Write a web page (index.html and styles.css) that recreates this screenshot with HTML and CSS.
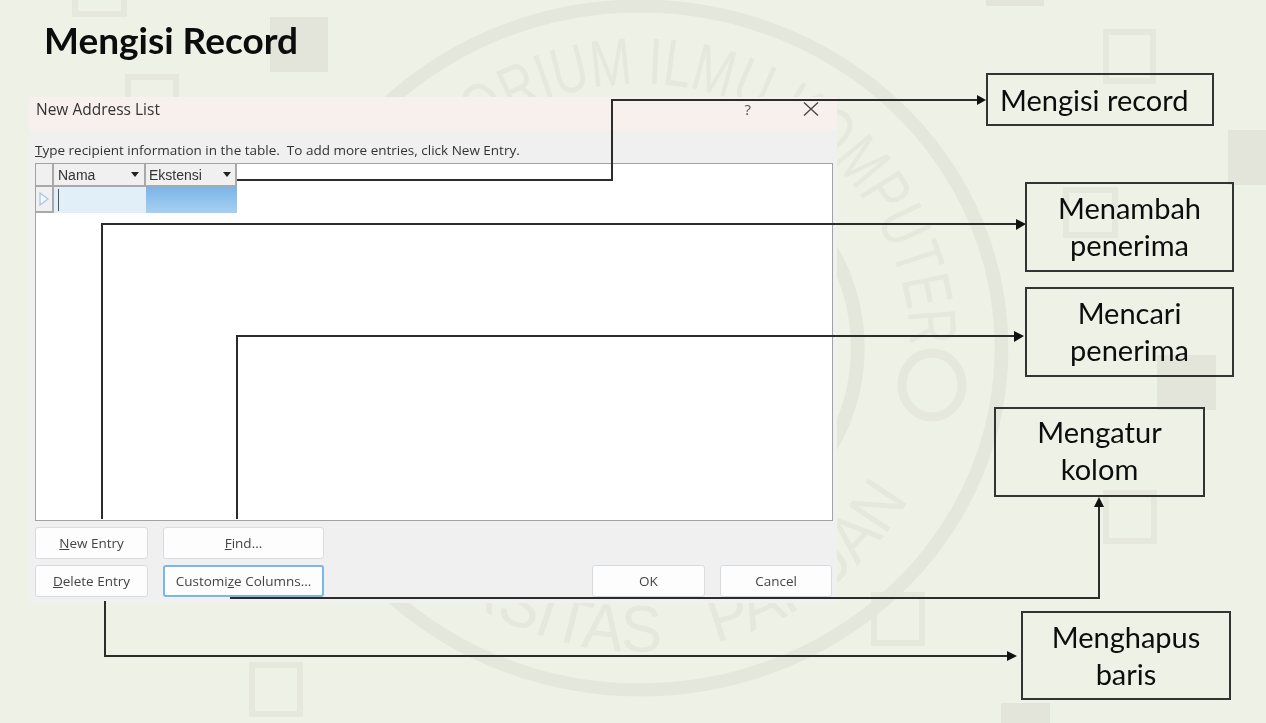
FILE: index.html
```html
<!DOCTYPE html>
<html lang="id">
<head>
<meta charset="utf-8">
<title>Mengisi Record</title>
<link rel="stylesheet" href="styles.css">
</head>
<body>
<main class="slide">
  <svg class="backdrop" viewBox="0 0 1266 723" width="1266" height="723" aria-hidden="true">
    <g class="fill-square">
      <rect x="270" y="17" width="58" height="55"/>
      <rect x="1228" y="130" width="38" height="55"/>
      <rect x="1157" y="355" width="59" height="55"/>
      <rect x="986" y="-5" width="58" height="11"/>
      <rect x="1001" y="703" width="49" height="30"/>
    </g>
    <g class="hollow-square">
      <rect x="75" y="-30" width="49" height="44"/>
      <rect x="128" y="77" width="48" height="50"/>
      <rect x="1106" y="32" width="47" height="49"/>
      <rect x="1066" y="190" width="49" height="45"/>
      <rect x="1106" y="493" width="48" height="48"/>
      <rect x="874" y="595" width="48" height="48"/>
      <rect x="252" y="665" width="48" height="49"/>
    </g>
    <g transform="translate(640 348) scale(1.057 1)">
      <circle class="ring-outer" r="342"/>
      <circle class="ring-inner" r="206"/>
    </g>
    <g transform="translate(640 348) scale(1.02 1)">
      <defs>
        <path id="arc-top" d="M -242.8 -105.5 A 265 265 0 0 1 264.9 -4.6"/>
        <path id="arc-bottom" d="M -287.4 99 A 304 304 0 0 0 263 152"/>
      </defs>
      <text class="seal-text" textLength="720" lengthAdjust="spacingAndGlyphs"><textPath href="#arc-top">KONSORIUM ILMU KOMPUTER</textPath></text>
      <text class="seal-text seal-text-wide" textLength="695" lengthAdjust="spacingAndGlyphs"><textPath href="#arc-bottom">UNIVERSITAS PAPUAN</textPath></text>
    </g>
    <ellipse class="seal-o" cx="932" cy="385" rx="30" ry="32"/>
  </svg>

  <h1 class="title">Mengisi Record</h1>

  <section class="dialog">
    <header class="dialog-bar">
      <span class="dialog-name">New Address List</span>
      <span class="dialog-help">?</span>
      <svg class="dialog-close" viewBox="0 0 16 16" width="16" height="16" aria-hidden="true"><path d="M1 1.5 15 14.5M15 1.5 1 14.5"/></svg>
    </header>
    <div class="dialog-body">
      <p class="hint"><u>T</u>ype recipient information in the table.&nbsp; To add more entries, click New Entry.</p>
      <div class="table-box">
        <div class="table-head">
          <span class="corner"></span>
          <span class="col-head col-a">Nama<i class="caret"></i></span>
          <span class="col-head col-b">Ekstensi<i class="caret"></i></span>
        </div>
        <div class="table-row">
          <span class="marker"><svg viewBox="0 0 10 14" width="10" height="14" aria-hidden="true"><path d="M1 1 9 7 1 13Z"/></svg></span>
          <span class="cell-a"><i class="text-cursor"></i></span>
          <span class="cell-b"></span>
        </div>
      </div>
      <div class="actions">
        <button class="btn btn-new"><u>N</u>ew Entry</button>
        <button class="btn btn-find"><u>F</u>ind...</button>
        <button class="btn btn-del"><u>D</u>elete Entry</button>
        <button class="btn btn-focus">Customi<u>z</u>e Columns...</button>
        <button class="btn btn-ok">OK</button>
        <button class="btn btn-cancel">Cancel</button>
      </div>
    </div>
  </section>

  <svg class="connectors" viewBox="0 0 1266 723" width="1266" height="723" aria-hidden="true">
    <path d="M237 180H612V100H978"/>
    <path d="M102 519V224H1016"/>
    <path d="M237 519V336H1014"/>
    <path d="M230 598H1099V506"/>
    <path d="M105 601V656H1007"/>
    <polygon points="986,100 977,95 977,105"/>
    <polygon points="1026,224 1016,219 1016,230"/>
    <polygon points="1024,336 1014,331 1014,342"/>
    <polygon points="1099,497 1094,507 1104,507"/>
    <polygon points="1017,656 1007,651 1007,661"/>
  </svg>

  <div class="note note-record">Mengisi record</div>
  <div class="note note-add">Menambah<br>penerima</div>
  <div class="note note-find">Mencari<br>penerima</div>
  <div class="note note-cols">Mengatur<br>kolom</div>
  <div class="note note-del">Menghapus<br>baris</div>
</main>
</body>
</html>
```
FILE: styles.css
```css
* { box-sizing: border-box; }
html, body { margin: 0; padding: 0; }
body { background: #eef1e6; }

.slide {
  position: relative;
  width: 1266px;
  height: 723px;
  overflow: hidden;
  background: #eef1e6;
  padding: 97px 0 0 29px;
  filter: blur(0.35px);
}

/* Backdrop */
.backdrop { position: absolute; left: 0; top: 0; }
.fill-square rect { fill: #e3e5db; }
.hollow-square rect { fill: none; stroke: #e6e8dd; stroke-width: 6; }
.ring-outer { fill: none; stroke: #e4e7db; stroke-width: 13; }
.ring-inner { fill: none; stroke: #e4e7db; stroke-width: 13; }
.seal-o { fill: none; stroke: #e6e8dd; stroke-width: 9; }
.seal-text {
  font-family: "Liberation Sans", Arial, sans-serif;
  font-size: 66px;
  fill: #e6e8dd;
}
.seal-text-wide { word-spacing: 40px; }

/* Title */
.title {
  position: absolute;
  left: 44px;
  top: 17px;
  margin: 0;
  font-family: Lato, "Noto Sans", sans-serif;
  font-size: 37px;
  line-height: 46px;
  font-weight: 700;
  color: #0c0c0c;
}

/* Dialog */
.dialog {
  position: relative;
  width: 808px;
  height: 506px;
  display: flex;
  flex-direction: column;
  background: #f0f0f0;
  font-family: "Open Sans", "Noto Sans", sans-serif;
  color: #333;
}
.dialog-bar {
  flex: 0 0 33px;
  display: flex;
  align-items: center;
  padding: 0 18px 9px 7px;
  background: #f8f0ed;
}
.dialog-name { flex: 1; font-size: 15.5px; line-height: 24px; }
.dialog-help { font-size: 15px; margin-right: 52px; color: #555; }
.dialog-close path { fill: none; stroke: #444; stroke-width: 1.3; }

.dialog-body {
  flex: 1;
  display: flex;
  flex-direction: column;
  padding: 0 4px 0 6px;
}
.hint {
  margin: 0;
  height: 33px;
  padding-top: 10px;
  font-size: 13.5px;
  line-height: 20px;
  white-space: nowrap;
}

.table-box {
  height: 358px;
  background: #fff;
  border: 1px solid #a2a2a2;
  font-family: "Liberation Sans", Arial, sans-serif;
  font-size: 14px;
  color: #333;
}
.table-head { display: flex; height: 23px; }
.corner {
  width: 18px;
  background: #f0f0f0;
  border-right: 2px solid #a9a9a9;
  border-bottom: 2px solid #a9a9a9;
}
.col-head {
  display: flex;
  align-items: center;
  justify-content: space-between;
  height: 23px;
  padding: 0 5px 0 4px;
  background: #f0f0f0;
  border-right: 2px solid #a9a9a9;
  border-bottom: 2px solid #a9a9a9;
  line-height: 20px;
}
.col-a { width: 92px; }
.col-b { width: 91px; padding: 0 4px 0 3px; }
.caret {
  width: 0;
  height: 0;
  border-left: 4.5px solid transparent;
  border-right: 4.5px solid transparent;
  border-top: 5px solid #222;
}
.table-row { display: flex; height: 26px; }
.marker {
  width: 18px;
  height: 26px;
  display: flex;
  align-items: center;
  justify-content: center;
  background: #f0f0f0;
  border-right: 2px solid #a9a9a9;
  border-bottom: 2px solid #a9a9a9;
}
.marker path { fill: #f4f7fb; stroke: #a9c6e6; stroke-width: 1.3; }
.cell-a {
  width: 92px;
  padding: 2px 0 0 4px;
  background: #e1eff9;
}
.text-cursor { display: block; width: 1px; height: 22px; background: #555; }
.cell-b {
  width: 91px;
  background: linear-gradient(#7ab5e8, #a7d0f1);
}

.actions {
  display: grid;
  grid-template-columns: 113px 161px 1fr 113px 112px;
  grid-template-rows: 32px 32px;
  column-gap: 15px;
  row-gap: 6px;
  margin-top: 6px;
  margin-right: 1px;
}
.btn {
  margin: 0;
  padding: 0;
  background: #fdfdfd;
  border: 1px solid #d6dce1;
  border-radius: 3px;
  font-family: "Open Sans", "Noto Sans", sans-serif;
  font-size: 13.5px;
  white-space: nowrap;
  color: #444;
}
.btn-new { grid-column: 1; grid-row: 1; }
.btn-find { grid-column: 2; grid-row: 1; }
.btn-del { grid-column: 1; grid-row: 2; }
.btn-focus { grid-column: 2; grid-row: 2; border: 2px solid #7ab6e6; }
.btn-ok { grid-column: 4; grid-row: 2; }
.btn-cancel { grid-column: 5; grid-row: 2; }

/* Connectors */
.connectors { position: absolute; left: 0; top: 0; }
.connectors path { fill: none; stroke: #2c2c2c; stroke-width: 2; }
.connectors polygon { fill: #111; }

/* Callouts */
.note {
  position: absolute;
  display: flex;
  align-items: center;
  justify-content: center;
  text-align: center;
  border: 2px solid #333;
  font-family: Lato, "Noto Sans", sans-serif;
  font-size: 29px;
  line-height: 37px;
  color: #0d0d0d;
}
.note-record { left: 986px; top: 73px; width: 228px; height: 53px; justify-content: flex-start; padding-left: 12px; }
.note-add { left: 1025px; top: 182px; width: 209px; height: 90px; padding-bottom: 2px; }
.note-find { left: 1025px; top: 287px; width: 209px; height: 90px; padding-bottom: 2px; }
.note-cols { left: 994px; top: 407px; width: 211px; height: 90px; padding-bottom: 4px; }
.note-del { left: 1021px; top: 611px; width: 210px; height: 89px; padding-bottom: 2px; }
```
